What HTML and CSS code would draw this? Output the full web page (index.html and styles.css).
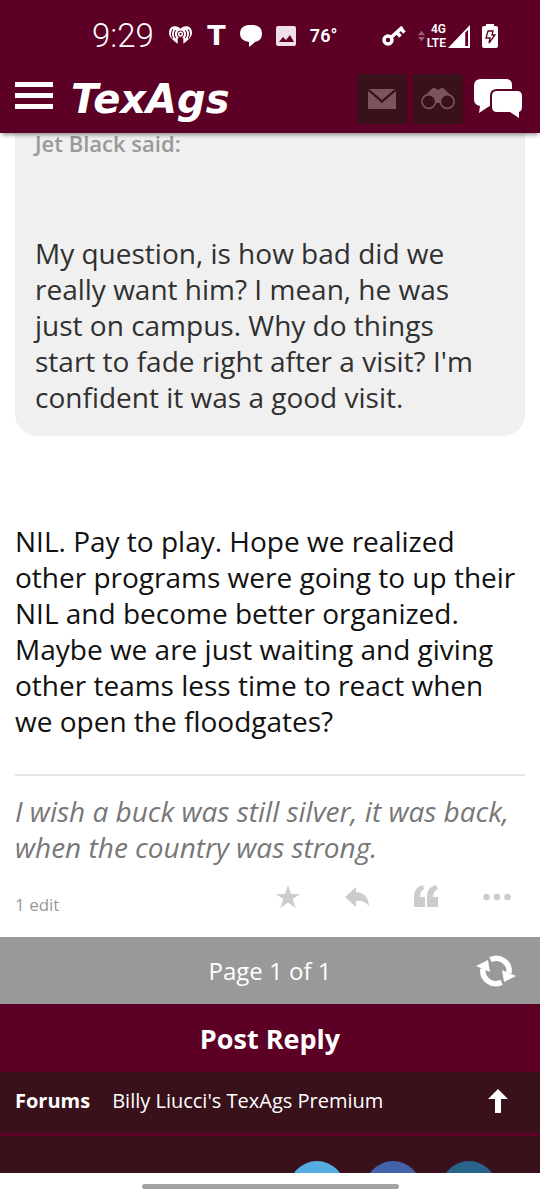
FILE: index.html
```html
<!DOCTYPE html>
<html lang="en">
<head>
<meta charset="utf-8">
<meta name="viewport" content="width=device-width, initial-scale=1">
<title>TexAgs</title>
<link rel="stylesheet" href="styles.css">
</head>
<body>
<div class="app">
  <header class="header">
    <div class="status">
      <div class="status-left">
        <span class="clock">9:29</span>
        <svg class="i-heart" viewBox="0 0 26 22" fill="none"><path fill="#fff" d="M13 3C10-1 1-1 1 7c0 4 3 7 9 11.500v-5.500l2-2h2l2 2v5.500C22 14 25 11 25 7 25-1 16-1 13 3Z"/><circle cx="13" cy="8.500" r="3.300" fill="#fff" stroke="#5c0025"/><circle cx="13" cy="8.500" r="1.200" fill="#5c0025"/><path stroke="#5c0025" stroke-width="1.100" d="M8 4.500q-3 4 0 8M5 3.500q-3 5 0 9.500M18 4.500q3 4 0 8M21 3.500q3 5 0 9.500"/></svg>
        <span class="carrier">T</span>
        <svg class="i-bubble" viewBox="0 0 22 22"><path fill="#fff" d="M8 0h6q8 1 8 8.500T15 17q-3 3-6 5v-5Q0 16 0 8.500T8 0Z"/></svg>
        <svg class="i-image" viewBox="0 0 20 20"><rect width="20" height="20" rx="2" fill="#efdfe6"/><path fill="#5c0025" d="m3 16 4-5 3 3 4-5 4 7Z"/></svg>
        <span class="temp">76°</span>
      </div>
      <div class="status-right">
        <svg class="i-key" viewBox="0 0 24 22" fill="none" stroke="#fff"><circle cx="6" cy="15" r="4" stroke-width="3.500"/><path stroke-width="3.500" d="M9 12.500 20.500 2M14.500 7l4 4.500M18.500 3.500l4 4"/></svg>
        <span class="network">
          <svg class="i-data" viewBox="0 0 8 12"><path fill="#986078" d="m4 0 4 5H0ZM4 12 0 7h8Z"/></svg>
          <span class="lte"><span>4G</span><span>LTE</span></span>
          <svg class="i-signal" viewBox="0 0 23 24"><path fill="#fff" fill-rule="evenodd" d="M23 0v24H0ZM18 8v14h3V5Z"/></svg>
        </span>
        <svg class="i-battery" viewBox="0 0 16 24"><path fill="#fff" d="M4 2V0h8v2h2q2 0 2 2v18q0 2-2 2H2q-2 0-2-2V4q0-2 2-2Z"/><path fill="none" stroke="#5c0025" stroke-width="1.300" d="M6 7h5l-1 4h3l-6 8 1-5H4Z"/></svg>
      </div>
    </div>
    <div class="toolbar">
      <button class="menu" aria-label="Menu"><span></span><span></span><span></span></button>
      <a class="logo" href="#">TexAgs</a>
      <nav class="tools">
        <button class="tile" aria-label="Messages"><svg class="i-mail" viewBox="0 0 28 20"><path fill="#7b555d" d="M1 0h26L14 11ZM0 2l14 12L28 2v18H0Z"/></svg></button>
        <button class="tile" aria-label="Watched topics"><svg class="i-bino" viewBox="0 0 34 22" fill="none"><path fill="#7b555d" d="M3 9 10 1.500q3-3 7 .5 4-3.500 7-.5L31 9 20 15h-6Z"/><circle cx="7.800" cy="13.500" r="6.900" fill="#38111a" stroke="#7b555d" stroke-width="1.600"/><circle cx="26.200" cy="13.500" r="6.900" fill="#38111a" stroke="#7b555d" stroke-width="1.600"/></svg></button>
        <button class="chat" aria-label="Forums"><svg class="i-chat" viewBox="0 0 48 39" fill="#fff"><path d="M7 0h25q6 0 6 6v4H23q-7 0-7 7v10l-2 1-9 6 1-7q-6-1-6-7V7q0-7 7-7Z"/><path d="M23 12h20q5 0 5 5v11q0 4-3 5v6l-9-6H23q-5 0-5-5V17q0-5 5-5Z"/></svg></button>
      </nav>
    </div>
  </header>

  <main class="post">
    <blockquote class="quote">
      <div class="quote-author">Jet Black said:</div>
      <p class="quote-text">My question, is how bad did we really want him? I mean, he was just on campus. Why do things start to fade right after a visit? I'm confident it was a good visit.</p>
    </blockquote>
    <p class="post-text">NIL. Pay to play. Hope we realized other programs were going to up their NIL and become better organized. Maybe we are just waiting and giving other teams less time to react when we open the floodgates?</p>
    <p class="signature">I wish a buck was still silver, it was back, when the country was strong.</p>
    <div class="post-footer">
      <span class="edits">1 edit</span>
      <div class="actions">
        <button aria-label="Star"><svg class="i-action" viewBox="0 0 24 24"><path d="m12 0 3 9h9l-7.300 5 3 9L12 17.500 4.300 23l3-9L0 9h9Z"/></svg></button>
        <button aria-label="Reply"><svg class="i-action" viewBox="0 0 24 24"><path d="M0 12 11 2v5q12 1 13 14-5-6-13-5v6Z"/></svg></button>
        <button aria-label="Quote"><svg class="i-action" viewBox="0 0 24 24"><path d="M0 22V12Q0 2 9 0l1 4q-4 2-4 8h5v10ZM13 22V12Q13 2 22 0l2 4q-5 2-5 8h5v10Z"/></svg></button>
        <button aria-label="More"><svg class="i-more" viewBox="0 0 28 24"><circle cx="3.500" cy="12" r="3.300"/><circle cx="14" cy="12" r="3.300"/><circle cx="24.500" cy="12" r="3.300"/></svg></button>
      </div>
    </div>
  </main>

  <div class="pager">
    <span>Page 1 of 1</span>
    <button aria-label="Refresh"><svg class="i-refresh" viewBox="0 0 40 32"><path fill="none" stroke="#fff" stroke-width="5.500" d="M14.500 4.800A12.800 12.800 0 0 1 33 18M25.500 27.200A12.800 12.800 0 0 1 7 14"/><path fill="#fff" d="m0 11 12-6 2 12ZM40 21l-12 6-2-12Z"/></svg></button>
  </div>
  <button class="post-reply">Post Reply</button>
  <nav class="crumbs">
    <a class="crumb-root" href="#">Forums</a>
    <a href="#">Billy Liucci's TexAgs Premium</a>
    <button aria-label="Back to top"><svg class="i-up" viewBox="0 0 20 24"><path fill="#fff" d="m10 0 10 10h-7v14H7V10H0Z"/></svg></button>
  </nav>
  <footer class="social">
    <a class="dot sky" href="#" aria-label="Twitter"></a>
    <a class="dot blue" href="#" aria-label="Facebook"></a>
    <a class="dot teal" href="#" aria-label="Instagram"></a>
  </footer>
  <div class="gesture"><span></span></div>
</div>
</body>
</html>
```
FILE: styles.css
```css
* { box-sizing: border-box; }
body {
  margin: 0;
  background: #fff;
  color: #111;
  font-family: "Open Sans", "Noto Sans", sans-serif;
}
p, blockquote { margin: 0; }
a { color: inherit; text-decoration: none; }
button {
  display: flex;
  align-items: center;
  justify-content: center;
  padding: 0;
  border: 0;
  background: none;
  color: inherit;
  font: inherit;
}
svg { display: block; flex: none; }
.app { display: flex; flex-direction: column; height: 100vh; overflow: hidden; }
.app > * { flex: none; }

.header {
  position: relative;
  z-index: 1;
  padding-bottom: 8px;
  background: #5c0025;
  color: #fff;
  box-shadow: 0 4px 4px -2px rgba(0, 0, 0, 0.4);
}
.status {
  display: flex;
  align-items: center;
  justify-content: space-between;
  height: 72px;
  padding: 0 42px 0 92px;
  font-family: Roboto, sans-serif;
}
.status-left { display: flex; align-items: center; gap: 14px; }
.status-right { display: flex; align-items: center; gap: 12px; }
.clock { font-size: 33px; font-weight: 300; line-height: 36px; }
.carrier {
  width: 19px;
  font-family: "DejaVu Sans", sans-serif;
  font-size: 27px;
  font-weight: 700;
  line-height: 32px;
  text-align: center;
}
.temp { font-size: 18px; font-weight: 600; line-height: 20px; }
.network { display: flex; align-items: center; gap: 2px; }
.lte {
  display: flex;
  flex-direction: column;
  align-items: flex-end;
  font-size: 12px;
  font-weight: 600;
  line-height: 14px;
}
.i-heart { width: 25px; height: 21px; }
.i-bubble { width: 22px; height: 22px; }
.i-image { width: 20px; height: 20px; }
.i-key { width: 24px; height: 22px; }
.i-data { width: 7px; height: 12px; }
.i-signal { width: 22px; height: 23px; }
.i-battery { width: 16px; height: 24px; }

.toolbar { display: flex; align-items: center; height: 53px; padding: 0 18px 0 15px; }
.menu { flex-direction: column; gap: 6px; margin-bottom: 6px; }
.menu span { width: 38px; height: 5px; background: #fff; }
.logo {
  margin-left: 18px;
  font-family: "DejaVu Sans", sans-serif;
  font-size: 40px;
  font-style: italic;
  font-weight: 700;
  line-height: 40px;
}
.tools { display: flex; align-items: center; gap: 6px; margin-left: auto; }
.tile { width: 50px; height: 50px; border-radius: 3px; background: #38111a; }
.chat { margin-left: 5px; }
.i-mail { width: 28px; height: 20px; }
.i-bino { width: 34px; height: 22px; }
.i-chat { width: 48px; height: 39px; }

.post { padding: 0 15px 20px; font-size: 28px; line-height: 36px; }
.quote {
  padding: 0 30px 21px 20px;
  border-radius: 0 0 22px 22px;
  background: #f0f0f0;
  color: #303030;
}
.quote-author { color: #999; font-size: 22px; font-weight: 600; line-height: 20px; }
.quote-text { padding-top: 82px; }
.post-text { padding: 87px 0 35px; border-bottom: 2px solid #e4e4e4; }
.signature { padding-top: 17px; color: #777; font-style: italic; }
.post-footer { display: flex; justify-content: space-between; padding: 20px 14px 0 0; }
.edits { padding-top: 8px; color: #999; font-size: 17px; line-height: 24px; }
.actions { display: flex; gap: 45px; height: 24px; fill: #ccc; }
.i-action { width: 24px; height: 24px; }
.i-more { width: 28px; height: 24px; }

.pager {
  display: grid;
  grid-template-columns: 1fr auto 1fr;
  align-items: center;
  height: 67px;
  padding: 0 24px;
  background: #999;
  color: #fff;
  font-size: 24px;
  line-height: 32px;
}
.pager span { grid-column: 2; }
.pager button { justify-self: end; }
.i-refresh { width: 40px; height: 32px; }
.post-reply {
  height: 68px;
  background: #5c0025;
  color: #fff;
  font-size: 27px;
  font-weight: 700;
}
.crumbs {
  display: flex;
  align-items: center;
  gap: 22px;
  height: 64px;
  padding: 0 32px 4px 15px;
  border-bottom: 3px solid #5c0025;
  background: #38111a;
  color: #fff;
  font-size: 20px;
  line-height: 28px;
}
.crumb-root { font-weight: 700; }
.crumbs button { margin-left: auto; }
.i-up { width: 20px; height: 24px; }
.app > .social {
  display: flex;
  flex: 1 1 0;
  justify-content: flex-end;
  gap: 20px;
  min-height: 0;
  padding: 25px 43px 0;
  overflow: hidden;
  background: #38111a;
}
.dot { flex: none; width: 56px; height: 56px; border-radius: 50%; }
.sky { background: #55acdf; }
.blue { background: #4262aa; }
.teal { background: #286389; }
.gesture { display: flex; align-items: center; justify-content: center; height: 27px; }
.gesture span { width: 257px; height: 5px; border-radius: 3px; background: #a3a3a3; }
```
